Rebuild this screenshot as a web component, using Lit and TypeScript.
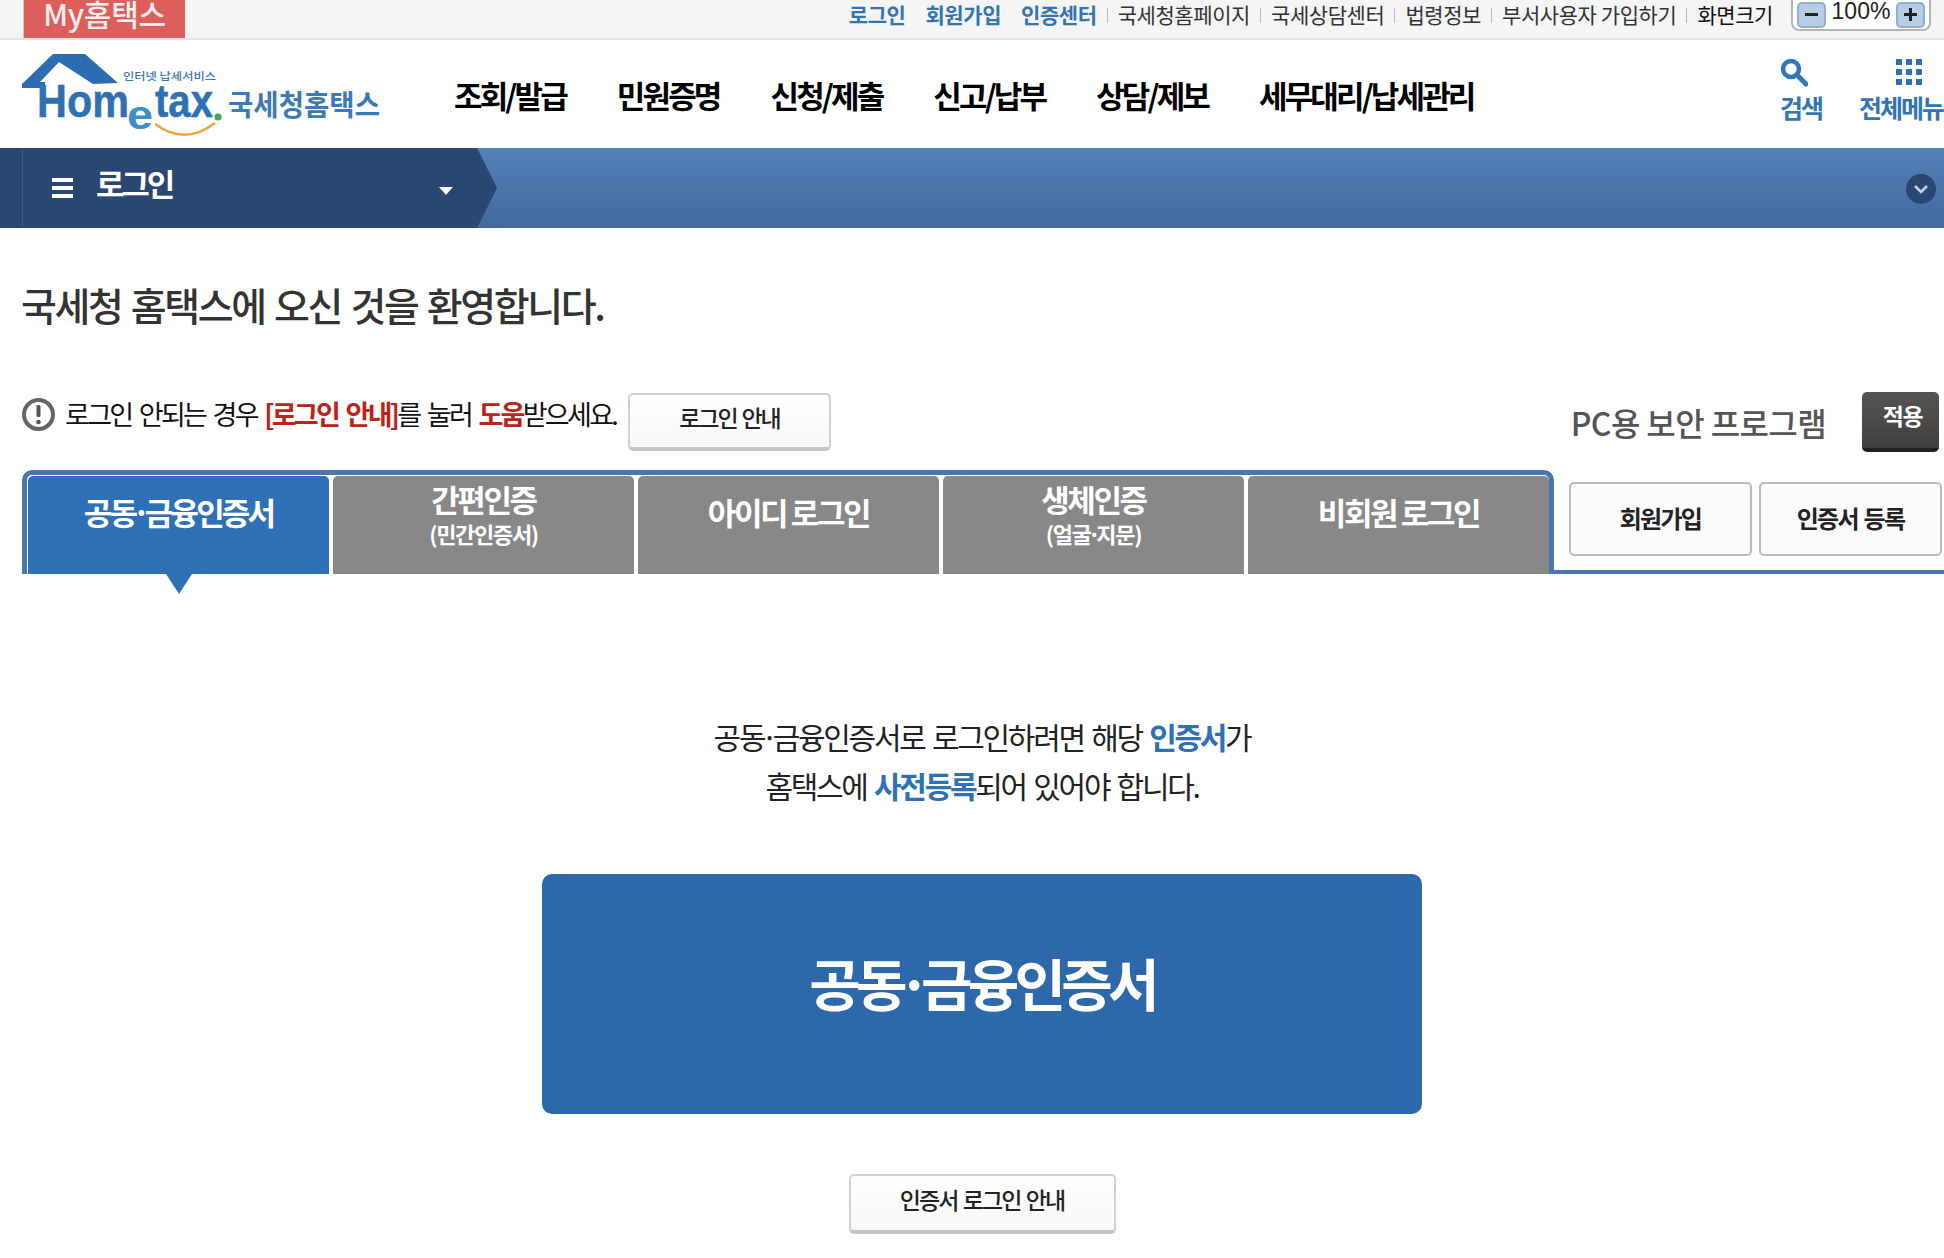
import { LitElement, html, css } from "lit";
import { customElement } from "lit/decorators.js";

const K = `"Noto Sans CJK KR", "Noto Sans", sans-serif`;

@customElement("app-root")
export class AppRoot extends LitElement {
  static styles = css`
    :host { display: block; width: 1944px; height: 1258px; overflow: hidden; background: #fff; font-family: "Noto Sans CJK KR", "Noto Sans", sans-serif; color: #222; }
    * { box-sizing: border-box; }
    .top { height: 40px; background: #f5f5f5; border-bottom: 2px solid #e4e4e2; display: flex; align-items: flex-start; overflow: hidden; }
    .my { margin-left: 23px; width: 162px; height: 38px; background: #dd5f5b; color: #fbeeee; font-size: 30px; font-weight: 500; line-height: 27px; text-align: center; border-left: 1px solid #ccc; letter-spacing: -0.3px; }
    .links { margin-left: auto; display: flex; align-items: center; height: 31px; font-size: 21px; letter-spacing: -0.42px; white-space: nowrap; }
    .links a { color: #333; margin-top: -4px; }
    .links a.b { color: #3274b4; font-weight: 700; margin-right: 20px; }
    .links a.b.last { margin-right: 0; }
    .links a.k { color: #111; }
    .sep { width: 1px; height: 15px; background: #bbb; margin: 0 10px; }
    .zoom { margin: 0 13px 0 18px; width: 140px; height: 31px; border: 2px solid #b4b4b4; border-top: 0; border-radius: 0 0 8px 8px; background: #fff; display: flex; justify-content: space-between; align-items: center; padding: 0 4px; }
    .zb { width: 29px; height: 26px; border: 2px solid #8fb0d4; border-radius: 5px; background: #b7cde4; display: flex; align-items: center; justify-content: center; }
    .pct { font-family: "Liberation Sans", sans-serif; font-size: 23px; letter-spacing: 0; color: #222; margin-top: -7px; line-height: 26px; }

    .hdr { height: 108px; display: flex; align-items: flex-start; background: #fff; }
    .logo { width: 400px; height: 108px; flex: none; margin-left: 15px; display: block; }
    .nav { display: flex; margin-left: 39px; margin-top: 33px; font-size: 31px; font-weight: 700; color: #000; letter-spacing: -2.85px; line-height: 44px; white-space: nowrap; }
    .nav span { margin-right: 51px; }
    .tools { margin-left: auto; display: flex; color: #3274b4; font-size: 25px; font-weight: 700; letter-spacing: -2px; margin-top: 18px; }
    .tool { display: flex; flex-direction: column; align-items: center; line-height: 34px; white-space: nowrap; }
    .tool svg { display: block; height: 32px; }
    .t1 { width: 42px; margin-right: 38px; }
    .t1 svg { margin-right: 14px; }
    .t2 { width: 82px; margin-right: 2px; }
    .t2 svg { margin-left: 16px; }

    .lnb { height: 80px; background: linear-gradient(#5480b8, #44699f); display: flex; align-items: center; }
    .lnbl { width: 497px; height: 80px; background: #2a4672; clip-path: polygon(0 0, 477px 0, 497px 40px, 477px 80px, 0 80px); display: flex; align-items: center; padding-left: 22px; }
    .lnbl .ln { width: 1px; height: 80px; background: #3a5a8a; }
    .burger { width: 21px; height: 20px; margin-left: 29px; display: flex; flex-direction: column; justify-content: space-between; }
    .burger i { display: block; height: 4px; background: #fff; }
    .lnbt { color: #fff; font-size: 31px; font-weight: 700; letter-spacing: -3.2px; margin-left: 23px; margin-top: -11px; line-height: 40px; }
    .caret { margin-left: 267px; margin-top: 5px; width: 0; height: 0; border: 7px solid transparent; border-top: 8px solid #fff; border-bottom: 0; }
    .down { margin-left: auto; margin-right: 8px; margin-top: 2px; width: 30px; height: 30px; border-radius: 50%; background: #2a4672; display: flex; align-items: center; justify-content: center; }

    h1 { margin: 51px 0 0 21px; padding-bottom: 1px; font-size: 39px; font-weight: 500; color: #333; letter-spacing: -2.4px; word-spacing: 3px; line-height: 50px; }
    .notice { display: flex; align-items: flex-start; margin: 62px 0 0 21px; height: 60px; }
    .ic { width: 35px; height: 35px; margin-top: 5px; flex: none; }
    .ntx { margin-left: 9px; font-size: 27px; letter-spacing: -2.7px; word-spacing: 4px; line-height: 40px; color: #111; white-space: nowrap; margin-top: 2px; width: 563px; }
    .ntx b { color: #bd2319; font-weight: 700; }
    .btn { background: linear-gradient(#fff, #f8f8f8); border: 2px solid #d0d0d0; border-bottom: 4px solid #c4c4c4; border-radius: 5px; font-weight: 500; color: #222; display: flex; align-items: center; justify-content: center; white-space: nowrap; }
    .b1 { width: 203px; height: 58px; margin-top: 1px; padding-bottom: 8px; font-size: 23px; letter-spacing: -2.1px; word-spacing: 2px; }
    .pc { margin-left: auto; margin-top: 10px; font-size: 32px; font-weight: 500; color: #555; letter-spacing: -0.6px; line-height: 40px; }
    .apply { margin: 0 5px 0 36px; width: 77px; height: 60px; padding-left: 4px; background: linear-gradient(#555, #3f3f3f); border-bottom: 4px solid #222; border-radius: 5px; color: #fff; font-size: 23px; font-weight: 700; text-align: center; line-height: 46px; letter-spacing: -1.5px; }

    .tabrow { display: flex; margin-top: 18px; height: 104px; margin-left: 22px; }
    .tabs { width: 1532px; height: 104px; border: 5px solid #4a76ae; border-bottom: 0; border-radius: 10px 10px 0 0; padding: 1px 0 0 1px; display: flex; gap: 4px; flex: none; background: #fff; }
    .tab { width: 301px; height: 98px; background: #888; border-radius: 5px 5px 0 0; color: #fff; font-weight: 700; font-size: 31px; letter-spacing: -2.4px; display: flex; flex-direction: column; align-items: center; line-height: 38px; padding-top: 17px; position: relative; white-space: nowrap; }
    .tab.two { padding-top: 4px; }
    .tab small { font-size: 22px; line-height: 30px; letter-spacing: -1.3px; }
    .tab.on { background: #2e71b6; letter-spacing: -2.8px; }
    .tab.on::after { content: ""; position: absolute; left: 138px; top: 98px; border: 13px solid transparent; border-top: 20px solid #2e71b6; border-bottom: 0; }
    .d { margin: 0 -3px; }
    .right { flex: 1; height: 92px; margin-top: 12px; border-bottom: 4px solid #4a76ae; display: flex; padding-left: 15px; gap: 7px; align-items: flex-start; }
    .rb { width: 183px; height: 74px; padding-bottom: 4px; background: #fbfbfb; border: 2px solid #bbb; border-radius: 5px; font-size: 24px; font-weight: 700; color: #222; letter-spacing: -1.7px; word-spacing: 2px; display: flex; align-items: center; justify-content: center; }

    .main { margin-left: 20px; }
    .msg { margin-top: 138px; text-align: center; font-size: 30px; line-height: 49px; letter-spacing: -2.3px; word-spacing: 3px; color: #222; }
    .msg b { color: #2e71b6; font-weight: 700; }
    .big { width: 880px; height: 240px; margin: 64px auto 0; background: #2c68aa; border-radius: 10px; color: #fff; font-size: 56px; font-weight: 700; letter-spacing: -4.8px; display: flex; align-items: center; justify-content: center; padding-bottom: 25px; }
    .big .d { margin: 0 -5px; }
    .b2 { width: 267px; height: 60px; margin: 60px auto 0; padding-bottom: 8px; font-size: 23px; letter-spacing: -1.9px; word-spacing: 2px; }
  `;

  render() {
    return html`
      <div class="top">
        <div class="my">My홈택스</div>
        <div class="links">
          <a class="b">로그인</a><a class="b">회원가입</a><a class="b last">인증센터</a>
          <i class="sep"></i><a>국세청홈페이지</a><i class="sep"></i><a>국세상담센터</a><i class="sep"></i><a>법령정보</a><i class="sep"></i><a>부서사용자 가입하기</a><i class="sep"></i><a class="k">화면크기</a>
          <div class="zoom">
            <div class="zb"><svg width="13" height="3"><rect width="13" height="3" fill="#222"/></svg></div>
            <span class="pct">100%</span>
            <div class="zb"><svg width="13" height="13"><path d="M5 0h3v5h5v3H8v5H5V8H0V5h5z" fill="#222"/></svg></div>
          </div>
        </div>
      </div>

      <div class="hdr">
        <svg class="logo" viewBox="0 0 400 108">
          <path d="M7 44 L38 14 H70 L103 43 L78 44 L44 22 L25 42 H30 V48 H7 Z" fill="#2c6cb0"/>
          <text x="108" y="40" font-family=${K} font-size="10.5" font-weight="500" fill="#3a7ab8" textLength="93" lengthAdjust="spacingAndGlyphs">인터넷 납세서비스</text>
          <text x="22" y="77" font-family="Liberation Sans" font-weight="700" font-size="46" fill="#2e71b3" stroke="#2e71b3" stroke-width=".5" textLength="92" lengthAdjust="spacingAndGlyphs">Hom</text>
          <text x="112" y="89" font-family="Liberation Sans" font-weight="700" font-size="40" fill="#3f8fc8" textLength="26" lengthAdjust="spacingAndGlyphs">e</text>
          <text x="140" y="77" font-family="Liberation Sans" font-weight="700" font-size="46" fill="#2e71b3" stroke="#2e71b3" stroke-width=".5" textLength="58" lengthAdjust="spacingAndGlyphs">tax</text>
          <circle cx="203" cy="77" r="3.6" fill="#3fa85a"/>
          <path d="M140 84 Q170 106 200 83" fill="none" stroke="#eea43c" stroke-width="2.4"/>
          <text x="213" y="76" font-family=${K} font-size="29" font-weight="700" fill="#3a7ab8" textLength="152" lengthAdjust="spacingAndGlyphs">국세청홈택스</text>
        </svg>
        <div class="nav"><span>조회/발급</span><span>민원증명</span><span>신청/제출</span><span>신고/납부</span><span>상담/제보</span><span>세무대리/납세관리</span></div>
        <div class="tools">
          <div class="tool t1">
            <svg width="28" height="32" viewBox="0 0 28 32"><circle cx="11" cy="11" r="8" fill="none" stroke="#2f78b8" stroke-width="4.5"/><path d="M17 17l9 9" stroke="#2f78b8" stroke-width="5" stroke-linecap="round"/></svg>
            검색
          </div>
          <div class="tool t2">
            <svg width="28" height="32" viewBox="0 0 28 32"><g fill="#2f6fb4"><rect x="1" y="1" width="6" height="6"/><rect x="11" y="1" width="6" height="6"/><rect x="21" y="1" width="6" height="6"/><rect x="1" y="11" width="6" height="6"/><rect x="11" y="11" width="6" height="6"/><rect x="21" y="11" width="6" height="6"/><rect x="1" y="21" width="6" height="6"/><rect x="11" y="21" width="6" height="6"/><rect x="21" y="21" width="6" height="6"/></g></svg>
            전체메뉴
          </div>
        </div>
      </div>

      <div class="lnb">
        <div class="lnbl">
          <i class="ln"></i>
          <div class="burger"><i></i><i></i><i></i></div>
          <div class="lnbt">로그인</div>
          <div class="caret"></div>
        </div>
        <div class="down"><svg width="16" height="10" viewBox="0 0 16 10"><path d="M2 2l6 6 6-6" fill="none" stroke="#c8d2e0" stroke-width="2.6"/></svg></div>
      </div>

      <h1>국세청 홈택스에 오신 것을 환영합니다.</h1>

      <div class="notice">
        <svg class="ic" viewBox="0 0 35 35"><circle cx="17.5" cy="17.5" r="14.5" fill="none" stroke="#666" stroke-width="4"/><rect x="15.5" y="8" width="4" height="12" rx="1.5" fill="#555"/><circle cx="17.5" cy="25" r="2.3" fill="#555"/></svg>
        <div class="ntx">로그인 안되는 경우 <b>[로그인 안내]</b>를 눌러 <b>도움</b>받으세요.</div>
        <div class="btn b1">로그인 안내</div>
        <div class="pc">PC용 보안 프로그램</div>
        <div class="apply">적용</div>
      </div>

      <div class="tabrow">
        <div class="tabs">
          <div class="tab on"><span>공동<span class="d">·</span>금융인증서</span></div>
          <div class="tab two">간편인증<small>(민간인증서)</small></div>
          <div class="tab">아이디 로그인</div>
          <div class="tab two">생체인증<small>(얼굴<span class="d">·</span>지문)</small></div>
          <div class="tab">비회원 로그인</div>
        </div>
        <div class="right">
          <div class="rb">회원가입</div>
          <div class="rb">인증서 등록</div>
        </div>
      </div>

      <div class="main">
        <div class="msg">
          공동<span class="d">·</span>금융인증서로 로그인하려면 해당 <b>인증서</b>가<br />
          홈택스에 <b>사전등록</b>되어 있어야 합니다.
        </div>
        <div class="big"><span>공동<span class="d">·</span>금융인증서</span></div>
        <div class="btn b2">인증서 로그인 안내</div>
      </div>
    `;
  }
}
